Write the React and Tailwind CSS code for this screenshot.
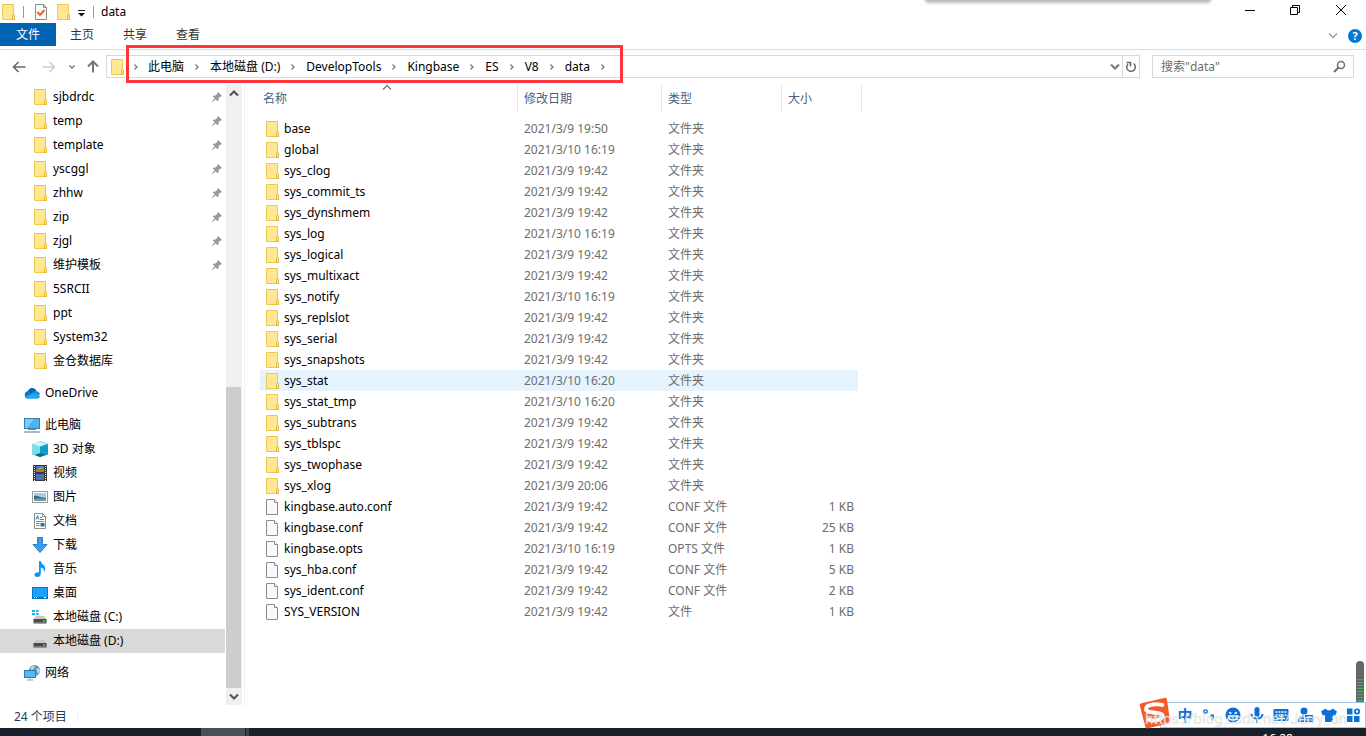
import React, { useState } from 'react';

const pinned = ['sjbdrdc', 'temp', 'template', 'yscggl', 'zhhw', 'zip', 'zjgl', '维护模板'];
const recent = ['5SRCII', 'ppt', 'System32', '金仓数据库'];
const crumbs = ['此电脑', '本地磁盘 (D:)', 'DevelopTools', 'Kingbase', 'ES', 'V8', 'data'];

const files = [
  { name: 'base', date: '2021/3/9 19:50' },
  { name: 'global', date: '2021/3/10 16:19' },
  { name: 'sys_clog', date: '2021/3/9 19:42' },
  { name: 'sys_commit_ts', date: '2021/3/9 19:42' },
  { name: 'sys_dynshmem', date: '2021/3/9 19:42' },
  { name: 'sys_log', date: '2021/3/10 16:19' },
  { name: 'sys_logical', date: '2021/3/9 19:42' },
  { name: 'sys_multixact', date: '2021/3/9 19:42' },
  { name: 'sys_notify', date: '2021/3/10 16:19' },
  { name: 'sys_replslot', date: '2021/3/9 19:42' },
  { name: 'sys_serial', date: '2021/3/9 19:42' },
  { name: 'sys_snapshots', date: '2021/3/9 19:42' },
  { name: 'sys_stat', date: '2021/3/10 16:20' },
  { name: 'sys_stat_tmp', date: '2021/3/10 16:20' },
  { name: 'sys_subtrans', date: '2021/3/9 19:42' },
  { name: 'sys_tblspc', date: '2021/3/9 19:42' },
  { name: 'sys_twophase', date: '2021/3/9 19:42' },
  { name: 'sys_xlog', date: '2021/3/9 20:06' },
  { name: 'kingbase.auto.conf', date: '2021/3/9 19:42', type: 'CONF 文件', size: '1 KB' },
  { name: 'kingbase.conf', date: '2021/3/9 19:42', type: 'CONF 文件', size: '25 KB' },
  { name: 'kingbase.opts', date: '2021/3/10 16:19', type: 'OPTS 文件', size: '1 KB' },
  { name: 'sys_hba.conf', date: '2021/3/9 19:42', type: 'CONF 文件', size: '5 KB' },
  { name: 'sys_ident.conf', date: '2021/3/9 19:42', type: 'CONF 文件', size: '2 KB' },
  { name: 'SYS_VERSION', date: '2021/3/9 19:42', type: '文件', size: '1 KB' },
];

const Svg = ({ w = 16, h = 16, children, className = '' }) => (
  <svg width={w} height={h} viewBox={`0 0 ${w} ${h}`} fill="none" className={`shrink-0 ${className}`} aria-hidden="true">
    {children}
  </svg>
);

const FolderIcon = () => (
  <Svg>
    <path d="M2.500.5h11v10l1 .5v4.500h-12z" fill="#ffe794" stroke="#ecc94f" />
    <path d="M12.500 15.500v-4l1-1.500 1 1.500v4z" fill="#ffe794" stroke="#e3b93a" />
  </Svg>
);

const FileIcon = () => (
  <Svg>
    <path d="M2.500.5h8l3 3v12h-11z" fill="#f8f9f9" stroke="#8c8c8c" />
    <path d="M10.500.5v3h3" fill="#fff" stroke="#8c8c8c" />
  </Svg>
);

const PinIcon = () => (
  <Svg w={10} h={10}>
    <path d="M6 0l4 4-1 .8-.8-.2L6.500 6.400l.1 2L5.600 9.300 3.700 7.300.6 10 0 9.400 2.700 6.300.8 4.400l.9-1 2 .1L5.400 1.800 5.200 1z" fill="#8f9ba3" />
  </Svg>
);

// d is the direction the chevron points to
const Chevron = ({ d = 'down', color = '#777', big = false }) => {
  const paths = {
    down: 'M1 2.500l4 4 4-4',
    up: 'M1 6.500l4-4 4 4',
    right: 'M3.500 2.500l2.500 2.500-2.500 2.500',
  };
  return (
    <Svg w={10} h={10}>
      <path d={paths[d]} stroke={color} strokeWidth={big ? 2 : 1.300} />
    </Svg>
  );
};

const OneDriveIcon = () => (
  <Svg>
    <path d="M3.500 7.500C3.800 4.500 6 3 8.200 3c2 0 3.600 1.200 4.300 3L9 9z" fill="#0364b8" />
    <path d="M3.700 13.500A3.700 3.700 0 0 1 3.500 6.300C5 6.200 6 7 8.500 8.500l1 4.300z" fill="#0f78d4" />
    <path d="M8 8c1.500-2 3.500-2.500 4.800-1.800 2 .2 3.200 1.700 3.200 3.400L11 11z" fill="#1490df" />
    <path d="M1 12.200L9 8.200l6.800 2.600a2.500 2.500 0 0 1-2.400 2.900H3.600A3.500 3.500 0 0 1 1 12.200z" fill="#28a8ea" />
  </Svg>
);

const ComputerIcon = () => (
  <Svg>
    <rect x=".5" y="1.500" width="15" height="10" fill="#4db2f5" stroke="#3a7ca8" />
    <path d="M1 2h9L3 11H1z" fill="#7accff" />
    <path d="M4 12.500h8" stroke="#6f97b3" />
    <path d="M0 15h16" stroke="#8e9fb3" strokeWidth="1.500" />
  </Svg>
);

const CubeIcon = () => (
  <Svg>
    <path d="M0 3l8-3v12l-8 1.500z" fill="#8fe3ea" />
    <path d="M8 0l8 3v10.500L8 12z" fill="#35c3d8" />
    <path d="M8 5.500L16 3v10.500L8 16z" fill="#109fc9" />
    <path d="M0 3l8 2.500V16l-8-2.500z" fill="#7fdde6" />
    <path d="M1 3l7-2.500L15 3 8 5.500z" fill="#cbf6f7" />
    <path d="M2.500 14l5.500-2 5.500 2L8 16z" fill="#0b7189" />
  </Svg>
);

const VideoIcon = () => (
  <Svg>
    <path d="M1 0h14v16H1z" fill="#3a3a3a" />
    <path d="M2.500 1v15M13.500 1v15" stroke="#eee" strokeDasharray="1 1" />
    <path d="M4 1h8v6H4zM4 9h8v6H4z" fill="#3f74c9" />
    <path d="M4 5l3-2 2 2 3-1v3H4z" fill="#c5762e" />
    <path d="M7 2h4v2H7z" fill="#7fb13a" />
    <path d="M6 10h2v2H6zM9 13h3v2H9z" fill="#a9523d" />
  </Svg>
);

const PictureIcon = () => (
  <Svg>
    <rect x=".5" y="2.500" width="15" height="11" fill="#fff" stroke="#9c9c9c" />
    <path d="M2 4h12v8H2z" fill="#9fd0ef" />
    <path d="M2 7c4-1 6 2 12 2v3H2z" fill="#3f7078" />
    <path d="M2 10c4-1 8-.5 12 0v2H2z" fill="#6c9fb4" />
  </Svg>
);

const DocumentIcon = () => (
  <Svg>
    <path d="M2.500.5h8l3 3v12h-11z" fill="#fff" stroke="#8c8c8c" />
    <path d="M10.500.5v3h3" stroke="#8c8c8c" />
    <path d="M4 6.500l1.500-4L7 6.500M4.500 5h2M8 4.500h2M8 6.500h4" stroke="#2b8fd4" />
    <path d="M4 8.500h8M4 10.500h3.500M4 12.500h3.500" stroke="#2ba0e8" />
    <path d="M8.500 10h4v3.500h-4z" fill="#2f7390" />
  </Svg>
);

const DownloadIcon = () => (
  <Svg>
    <path d="M5.500.5h5v7h4.500L8 15.500 1 7.500h4.500z" fill="#3b9bec" stroke="#2f7ec9" />
  </Svg>
);

const MusicIcon = () => (
  <Svg>
    <path d="M7 0h1.800c0 3 4.500 4 4.500 7.500 0 1.500-.5 2.500-1.300 3.500.4-3-1-4.200-3.200-4.500V13c0 1.800-1.500 3-3.600 3-1.700 0-2.700-.9-2.700-2.200C2.500 12 4.500 11 7 11.500z" fill="#0a96f5" />
  </Svg>
);

const DesktopIcon = () => (
  <Svg>
    <rect x=".5" y="2.500" width="15" height="11" fill="#1ba1fa" stroke="#0d79bd" />
    <path d="M1 12.500h14" stroke="#0f6fb0" />
    <path d="M2 12.500h1M4 12.500h1M12 12.500h2" stroke="#fff" />
  </Svg>
);

const DriveIcon = ({ system }) => (
  <Svg>
    {system && <path d="M0 1h3v2H0zM4 1h2.500v2H4zM0 4h3v2H0zM4 4h2.500v2H4z" fill="#19b5f1" />}
    <path d="M3.500 7h9l2 3.500h-13z" fill="#c9c9c9" />
    <path d="M1.500 10h13v4.500h-13z" fill="#4b4b4b" />
    <path d="M2 13.500h12" stroke="#777" />
    <path d="M11 12h2" stroke="#2ee83d" strokeWidth="1.500" />
  </Svg>
);

const NetworkIcon = () => (
  <Svg>
    <circle cx="10.500" cy="5.500" r="5.500" fill="#5a94b8" />
    <path d="M6.500 2.500C8 .8 10 .3 11 1l-1 3-3 1zM12 4l3-1 .8 3L14 9z" fill="#b9dbe6" />
    <rect x=".5" y="5.500" width="11" height="7" fill="#55b9f7" stroke="#2d7db0" />
    <path d="M6 13v1.500M3 15h6" stroke="#8ba2b5" />
  </Svg>
);

const devices = [
  { name: '3D 对象', icon: <CubeIcon /> },
  { name: '视频', icon: <VideoIcon /> },
  { name: '图片', icon: <PictureIcon /> },
  { name: '文档', icon: <DocumentIcon /> },
  { name: '下载', icon: <DownloadIcon /> },
  { name: '音乐', icon: <MusicIcon /> },
  { name: '桌面', icon: <DesktopIcon /> },
  { name: '本地磁盘 (C:)', icon: <DriveIcon system /> },
  { name: '本地磁盘 (D:)', icon: <DriveIcon />, active: true },
];

const NavItem = ({ icon, label, root, pin, active }) => (
  <a
    href="#"
    className={`flex h-6 items-center gap-[5px] pr-[3px] ${root ? 'pl-6' : 'pl-8'} ${active ? 'bg-[#d9d9d9]' : 'hover:bg-[#e5f3ff]'}`}
  >
    {icon}
    <span className="flex-1">{label}</span>
    {pin && <PinIcon />}
  </a>
);

const TitleBar = () => (
  <header className="flex h-[23px] items-center">
    <FolderIcon />
    <span className="ml-[7px] h-3 w-px bg-[#999]" />
    <button type="button" aria-label="属性" className="ml-2">
      <Svg>
        <path d="M3.500.5h8l3 3v12h-11z" fill="#f7f8f9" stroke="#8c8c8c" />
        <path d="M11.500.5v3h3" stroke="#8c8c8c" />
        <path d="M5.500 8l2.500 3 4.500-5" stroke="#f0642d" strokeWidth="2" />
      </Svg>
    </button>
    <button type="button" aria-label="新建文件夹" className="ml-[7px]">
      <FolderIcon />
    </button>
    <button type="button" aria-label="自定义快速访问工具栏" className="ml-1">
      <Svg w={12} h={12}>
        <path d="M3 4.500h7" stroke="#222" />
        <path d="M3 7h7L6.500 10.500z" fill="#111" />
      </Svg>
    </button>
    <span className="ml-[6px] h-3 w-px bg-[#999]" />
    <h1 className="ml-[7px] flex-1">data</h1>
    <div className="flex h-5 items-center gap-[30px] self-start pr-[18px]">
      <button type="button" aria-label="最小化">
        <Svg><path d="M3 8.500h10" stroke="#000" /></Svg>
      </button>
      <button type="button" aria-label="还原">
        <Svg>
          <path d="M2.500 5.500h7v7h-7zM4.500 5V3.500h7v7H10" stroke="#000" />
        </Svg>
      </button>
      <button type="button" aria-label="关闭">
        <Svg w={14} h={14}><path d="M2 2l10 10M12 2L2 12" stroke="#000" /></Svg>
      </button>
    </div>
  </header>
);

const Ribbon = () => (
  <div className="flex h-[27px] items-start border-b border-[#dadbdc] text-[#333]">
    <button type="button" className="h-[23px] w-14 bg-[#0063b1] text-white">文件</button>
    <div className="flex h-[24px] flex-1 items-center gap-[29px] pl-[14px]">
      <button type="button">主页</button>
      <button type="button">共享</button>
      <button type="button">查看</button>
    </div>
    <div className="flex h-[26px] items-center gap-[10px] pr-1">
      <button type="button" aria-label="展开功能区">
        <Chevron color="#999" />
      </button>
      <button type="button" aria-label="帮助" className="h-[14px] w-[14px] rounded-full bg-[#0078d7] text-[11px] leading-[14px] font-bold text-white">
        ?
      </button>
    </div>
  </div>
);

const AddressRow = ({ query, setQuery }) => (
  <div className="flex h-[35px] items-start pt-[5px] pr-3 pl-3">
    <div className="flex h-[23px] w-[94px] items-center">
      <button type="button" aria-label="后退">
        <Svg w={14} h={14}><path d="M1.500 7h12M6.500 2L1.500 7l5 5" stroke="#666" strokeWidth="1.500" /></Svg>
      </button>
      <button type="button" aria-label="前进" className="ml-4">
        <Svg w={14} h={14}><path d="M.5 7h12M7.500 2l5 5-5 5" stroke="#ccc" strokeWidth="1.500" /></Svg>
      </button>
      <button type="button" aria-label="最近浏览的位置" className="ml-[11px]">
        <Svg w={10} h={10}><path d="M2.500 3.500L5 6l2.500-2.500" stroke="#777" strokeWidth="1.500" /></Svg>
      </button>
      <button type="button" aria-label="上移" className="ml-[9px]">
        <Svg w={14} h={14}><path d="M7 1.500v11M2 6.500l5-5 5 5" stroke="#777" strokeWidth="2" /></Svg>
      </button>
    </div>
    <div className="flex h-[23px] flex-1 items-center border border-[#d9d9d9] pl-[2px]">
      <FolderIcon />
      <nav aria-label="地址" className="relative flex h-full items-center pr-2">
        {crumbs.map((crumb, i) => (
          <React.Fragment key={crumb}>
            <span className={`flex justify-center ${i === 0 ? 'w-[22px]' : 'w-6'}`}><Chevron d="right" /></span>
            <a href="#" className="px-px">{crumb}</a>
          </React.Fragment>
        ))}
        <span className="flex w-6 justify-center"><Chevron d="right" /></span>
        <span className="pointer-events-none absolute -top-[11px] right-0 -bottom-[6px] left-px border-3 border-[#ff3537]" />
      </nav>
      <span className="flex-1" />
      <button type="button" aria-label="上一个位置" className="flex w-[15px] justify-center">
        <Chevron big />
      </button>
      <button type="button" aria-label="刷新" className="flex h-full w-[17px] items-center justify-center border-l border-[#d9d9d9]">
        <Svg w={12} h={12}>
          <path d="M8.500 2.500A4.300 4.300 0 1 1 3 3" stroke="#666" strokeWidth="1.500" />
          <path d="M1.500 1.500h4v4" stroke="#666" strokeWidth="1.500" />
        </Svg>
      </button>
    </div>
    <div className="ml-3 flex h-[23px] w-[202px] items-center border border-[#d9d9d9] pr-[7px] pl-2">
      <input
        aria-label="搜索"
        value={query}
        onChange={(e) => setQuery(e.target.value)}
        placeholder={'搜索"data"'}
        className="min-w-0 flex-1 outline-none placeholder:text-[#6d6d6d]"
      />
      <Svg w={13} h={13}>
        <circle cx="8" cy="5" r="3.500" stroke="#707070" strokeWidth="1.500" />
        <path d="M5.500 7.500L1 12" stroke="#707070" strokeWidth="2" />
      </Svg>
    </div>
  </div>
);

const Sidebar = () => (
  <aside className="flex w-[245px] shrink-0 border-r border-[#f0f0f0]">
    <nav aria-label="导航窗格" className="w-[225px]">
      {pinned.map((name) => <NavItem key={name} icon={<FolderIcon />} label={name} pin />)}
      {recent.map((name) => <NavItem key={name} icon={<FolderIcon />} label={name} />)}
      <div className="pt-2">
        <NavItem root icon={<OneDriveIcon />} label="OneDrive" />
      </div>
      <div className="pt-2">
        <NavItem root icon={<ComputerIcon />} label="此电脑" />
        {devices.map((d) => <NavItem key={d.name} icon={d.icon} label={d.name} active={d.active} />)}
      </div>
      <div className="pt-2">
        <NavItem root icon={<NetworkIcon />} label="网络" />
      </div>
    </nav>
    <div className="ml-px flex w-4 flex-col bg-[#f0f0f0]">
      <button type="button" aria-label="向上滚动" className="flex h-[17px] w-[15px] items-center justify-center">
        <Chevron d="up" color="#505050" big />
      </button>
      <div className="flex flex-1 flex-col justify-end">
        <div className="h-[301px] w-[15px] bg-[#cdcdcd]" />
      </div>
      <button type="button" aria-label="向下滚动" className="flex h-[17px] w-[15px] items-center justify-center">
        <Chevron color="#505050" big />
      </button>
    </div>
  </aside>
);

const FileTable = () => {
  const head = 'h-[26px] border-r border-[#e5e5e5] leading-[28px]';
  return (
    <table className="ml-[15px] w-[602px] table-fixed border-collapse self-start text-left text-[#6d6d6d]">
      <colgroup>
        <col className="w-[258px]" />
        <col className="w-[144px]" />
        <col className="w-[120px]" />
        <col className="w-[76px]" />
        <col className="w-1" />
      </colgroup>
      <thead className="text-[#4c607a]">
        <tr className="h-[33px] align-top">
          <th className="p-0 font-normal">
            <div className={`relative pl-[3px] ${head}`}>
              名称
              <span className="absolute -top-[2px] left-[122px]"><Chevron d="up" /></span>
            </div>
          </th>
          <th className="p-0 font-normal"><div className={`pl-[6px] ${head}`}>修改日期</div></th>
          <th className="p-0 font-normal"><div className={`pl-[6px] ${head}`}>类型</div></th>
          <th colSpan={2} className="p-0 font-normal"><div className={`pl-[6px] ${head}`}>大小</div></th>
        </tr>
      </thead>
      <tbody>
        {files.map((f) => {
          const bg = f.name === 'sys_stat' ? 'bg-[#e5f3ff]' : '';
          return (
            <tr key={f.name} className="h-[21px]">
              <td className={`p-0 text-black ${bg}`}>
                <div className="flex items-center gap-1 pl-1">
                  {f.type ? <FileIcon /> : <FolderIcon />}
                  {f.name}
                </div>
              </td>
              <td className={`py-0 pr-0 pl-[6px] ${bg}`}>{f.date}</td>
              <td className={`py-0 pr-0 pl-[6px] ${bg}`}>{f.type || '文件夹'}</td>
              <td className={`py-0 pr-1 pl-0 text-right ${bg}`}>{f.size}</td>
              <td className="p-0" />
            </tr>
          );
        })}
      </tbody>
    </table>
  );
};

const InputBar = () => (
  <div className="absolute right-0 bottom-2 flex h-[26px] items-center border border-[#a9c4e4] bg-white text-[#0a6fd6]">
    <Svg w={32} h={32} className="-mt-1 -ml-[22px]">
      <path d="M1.500 6.500L26 .8q1.500-.3 1.900 1.200L31 24q.2 1.500-1.300 1.900L8.500 31.500q-1.500.3-2-1.200L.8 8.500q-.3-1.500.7-2z" fill="#f4592a" />
      <path d="M25 8.500c-6-2.500-18-1.500-18 3.500 0 5.500 17 2 16.500 7-.5 4.500-10 5.500-16 3" stroke="#fff" strokeWidth="4" />
    </Svg>
    <div className="flex items-center gap-2 pr-1 pl-[6px]">
      <span className="w-4 text-center text-[15px] font-bold">中</span>
      <Svg>
        <circle cx="4.500" cy="4.500" r="1.700" stroke="currentColor" strokeWidth="1.300" />
        <path d="M9.500 7.500h3.500v3c0 1.500-1 2.500-2.500 3v-1.500c.6-.3 1-.7 1-1.300h-2z" fill="currentColor" />
      </Svg>
      <Svg>
        <circle cx="8" cy="8" r="7.500" fill="currentColor" />
        <path d="M4 5.500l2.500 1M12 5.500l-2.500 1M3.500 9h9c0 3-2 4-4.500 4s-4.500-1-4.500-4z" stroke="#fff" strokeWidth="1.400" />
      </Svg>
      <Svg>
        <rect x="5.500" y="0" width="5" height="10" rx="2.500" fill="currentColor" />
        <path d="M2.500 7c0 6 11 6 11 0M8 12v4" stroke="currentColor" strokeWidth="2" />
      </Svg>
      <Svg>
        <rect x=".5" y="2" width="15" height="12" rx="1" fill="currentColor" />
        <path d="M2.500 5h11M2.500 8h11" stroke="#fff" strokeWidth="1.500" strokeDasharray="2 1" />
        <path d="M4 11.500h8" stroke="#fff" strokeWidth="1.500" />
      </Svg>
      <Svg>
        <circle cx="7" cy="4" r="3.500" fill="currentColor" />
        <path d="M1 15c0-4 2-6.500 6-6.500V15zM8 8h8v7H8z" fill="currentColor" />
        <path d="M9 10.500h6M9 13h6" stroke="#fff" strokeDasharray="2.500 1" />
      </Svg>
      <Svg>
        <path d="M4.500 1.500C6 4 10 4 11.500 1.500L16 4.500l-1.800 4-2.200-.5v7H4V8l-2.200.5L0 4.500z" fill="currentColor" />
      </Svg>
      <Svg>
        <path d="M2 1.500h5.500v6H2zM2 9h5.500v6H2zM9 9h5.500v6H9z" fill="currentColor" />
        <circle cx="12" cy="4.500" r="2.200" stroke="currentColor" strokeWidth="1.800" />
      </Svg>
    </div>
    <span className="pointer-events-none absolute top-2 -left-4 font-[Roboto,sans-serif] text-[15px] leading-4 whitespace-nowrap text-white/50 [text-shadow:0_0_1px_#ccc]">
      https://blog.csdn.net/Jerry_an
    </span>
  </div>
);

const App = () => {
  const [query, setQuery] = useState('');

  return (
    <div className="relative flex min-h-screen flex-col overflow-hidden bg-white font-['Noto_Sans','Noto_Sans_CJK_SC',sans-serif] text-[12px] leading-4 text-black">
      {/* shadow of the floating bar above the window */}
      <div className="absolute -top-2 right-[156px] h-[9px] w-[284px] bg-[#bbb] shadow-[0_1px_4px_#999]" />
      <TitleBar />
      <Ribbon />
      <AddressRow query={query} setQuery={setQuery} />
      <main className="flex flex-1">
        <Sidebar />
        <FileTable />
      </main>
      <footer className="flex h-[23px] items-center gap-[10px] pl-[14px] text-[#1e395b]">
        <span>24 个项目</span>
        <span className="h-3 w-px bg-[#eee]" />
      </footer>
      <div className="flex h-2 overflow-hidden bg-[#18212b]">
        <div className="ml-[201px] h-2 w-[44px] bg-[#474f58]" />
        <div className="ml-px h-2 w-[3px] bg-[#3a434c]" />
        <span className="mt-[3px] mr-[73px] ml-auto text-white">16:28</span>
      </div>
      <div className="absolute right-[2px] bottom-[34px] h-[41px] w-2 rounded-t-full bg-[#666] pt-[18px]">
        <div className="mx-px h-[23px] bg-[repeating-linear-gradient(#39b56a_0_1px,#666_1px_3px)]" />
      </div>
      <InputBar />
    </div>
  );
};

export default App;
